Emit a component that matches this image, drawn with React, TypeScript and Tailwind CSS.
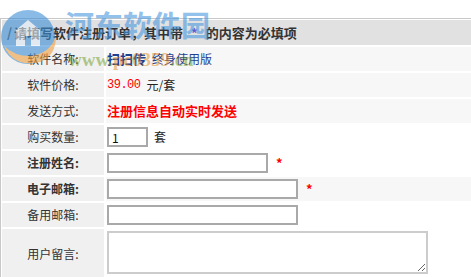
import React from "react";

const font = "font-['SimSun','Noto_Sans_CJK_SC',sans-serif]";

function Row({
  label,
  bold = false,
  shade = false,
  tall = false,
  children,
}: {
  label: string;
  bold?: boolean;
  shade?: boolean;
  tall?: boolean;
  children?: React.ReactNode;
}) {
  return (
    <div className={`flex gap-[2px] ${tall ? "h-[50px]" : "h-[24px]"}`}>
      <div
        className={`w-[102px] shrink-0 bg-[#f0f0f0] flex items-center justify-center text-[12px] text-[#333] ${bold ? "font-bold" : ""}`}
      >
        {label}:
      </div>
      <div className={`flex-1 flex items-center pl-[1px] ${shade ? "bg-[#f7f7f7]" : "bg-white"}`}>{children}</div>
    </div>
  );
}

function Star() {
  return <span className="ml-[8px] text-[13px] font-bold text-[#ff0000]">*</span>;
}

export default function App() {
  return (
    <div className={`relative w-[471px] h-[277px] overflow-hidden bg-white ${font}`}>
      <div className="pt-[18px]">
        <div className="border-t border-l border-[#c8c8c8] pt-[1px] pl-[1px] flex flex-col gap-[2px] w-[520px]">
          <div className="h-[25px] bg-[#e1e1e1] flex items-center pl-[5px] text-[13px] font-bold text-[#333]">
            <span className="text-[#555] mr-[2px]">/</span>
            请填写软件注册订单，其中带
            <span className="mx-[8px] text-[#6a5acd]">*</span>
            的内容为必填项
          </div>
          <Row label="软件名称" shade>
            <span className="text-[13px] font-bold text-[#1f3f8f]">扫扫传</span>
            <span className="ml-[6px] text-[12px] text-[#1f3f8f]">终身使用版</span>
          </Row>
          <Row label="软件价格" shade>
            <span className="text-[12px] text-[#ff0000] font-['Liberation_Mono',monospace] tracking-[-0.5px]">39.00</span>
            <span className="ml-[6px] text-[12px] text-[#222]">元/套</span>
          </Row>
          <Row label="发送方式" shade>
            <span className="text-[13px] font-bold text-[#ff0000]">注册信息自动实时发送</span>
          </Row>
          <Row label="购买数量">
            <input
              defaultValue="1"
              className="w-[41px] h-[20px] border-2 border-[#a9a9a9] px-[3px] text-[12px] text-[#111] outline-none"
            />
            <span className="ml-[6px] text-[12px] text-[#222]">套</span>
          </Row>
          <Row label="注册姓名" bold>
            <input className="w-[161px] h-[20px] border-2 border-[#a9a9a9] outline-none" />
            <Star />
          </Row>
          <Row label="电子邮箱" bold shade>
            <input className="w-[191px] h-[20px] border-2 border-[#a9a9a9] bg-white outline-none" />
            <Star />
          </Row>
          <Row label="备用邮箱">
            <input className="w-[191px] h-[20px] border-2 border-[#a9a9a9] outline-none" />
          </Row>
          <Row label="用户留言" tall>
            <textarea className="w-[321px] h-[43px] border-2 border-[#cccccc] outline-none self-start mt-[2px]" />
          </Row>
        </div>
      </div>

      {/* watermark overlay */}
      <div className="absolute left-0 top-[6px] opacity-60 pointer-events-none">
        <svg width="58" height="62" viewBox="0 0 58 62">
          <circle cx="28" cy="31" r="27" fill="#3d8fd6" />
          <path d="M4 40 Q14 62 40 56 Q56 50 56 30 Q50 48 30 50 Q14 50 4 40 Z" fill="#f0a040" />
          <path d="M16 24 L28 14 L40 24 L40 40 L16 40 Z" fill="#ffffff" opacity="0.85" />
          <rect x="25" y="30" width="6" height="10" fill="#3d8fd6" />
        </svg>
      </div>
      <div className="absolute left-[65px] top-[10px] text-[29px] leading-none font-bold text-[#4a98e0] opacity-60 pointer-events-none">
        河东软件园
      </div>
      <div className="absolute left-[68px] top-[50px] text-[19px] leading-none font-bold font-['Liberation_Serif',serif] opacity-50 pointer-events-none">
        <span className="text-[#6a9a20]">www.</span>
        <span className="text-[#e08a20]">pc0359</span>
        <span className="text-[#6a9a20]">.cn</span>
      </div>
    </div>
  );
}
